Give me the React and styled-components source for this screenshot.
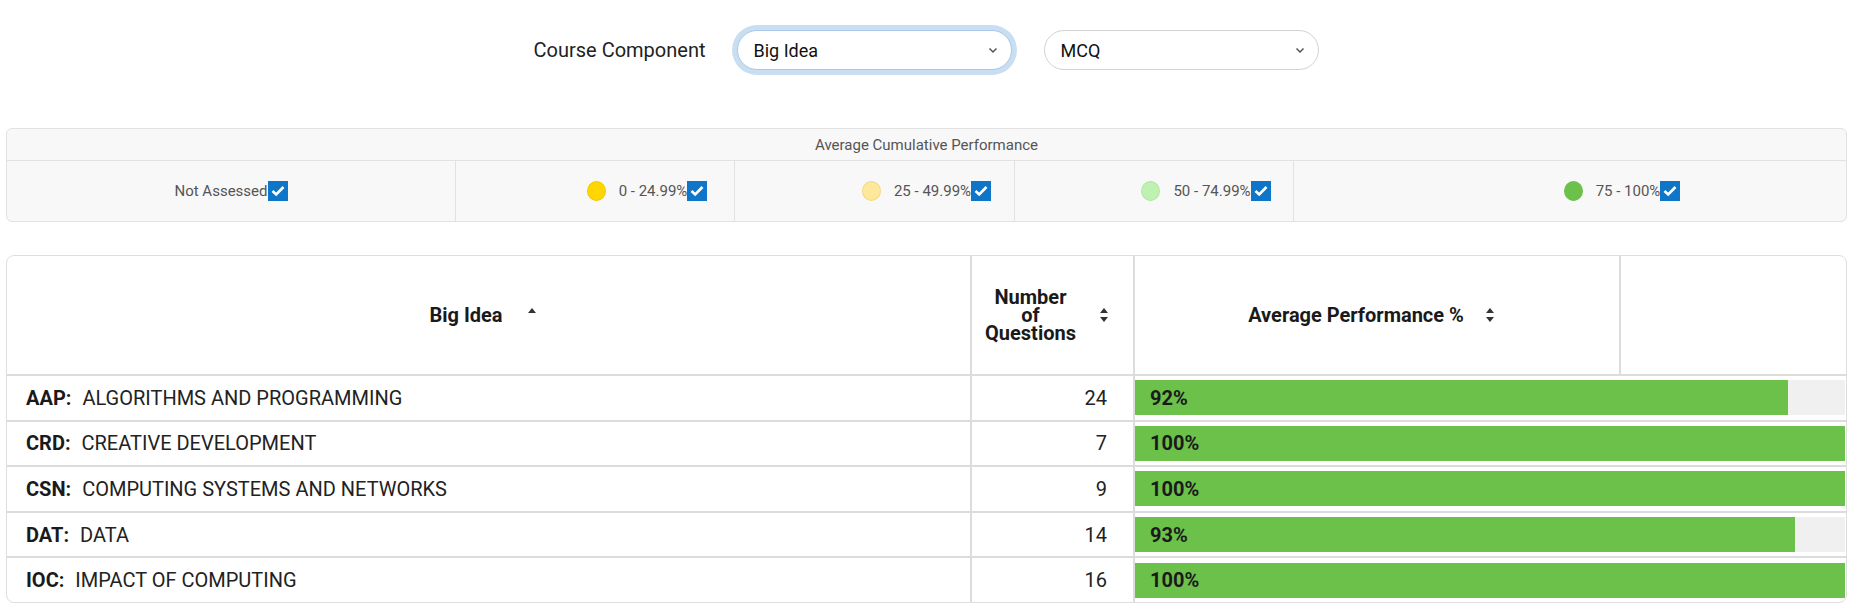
import React from "react";
import styled, { createGlobalStyle } from "styled-components";

const GlobalStyle = createGlobalStyle`
  body {
    margin: 0;
    background: #fff;
    font-family: Roboto, "Liberation Sans", sans-serif;
    color: #212121;
  }
`;

const Page = styled.div`
  padding: 30px 13px 0 6px;
`;

const Controls = styled.div`
  display: flex;
  justify-content: center;
  align-items: center;
  gap: 32px;
  height: 40px;
`;

const ControlLabel = styled.span`
  font-size: 20px;
  color: #222;
`;

const Select = styled.div`
  box-sizing: border-box;
  width: 275px;
  height: 40px;
  display: flex;
  align-items: center;
  justify-content: space-between;
  padding: 0 13px 0 15px;
  border: 1px solid ${(p) => (p.$focused ? "#a9c8ea" : "#d2d2d2")};
  border-radius: 20px;
  box-shadow: ${(p) => (p.$focused ? "0 0 0 5px #cadef2" : "none")};
  font-size: 18px;
  color: #111;
  background: #fff;
`;

const Legend = styled.div`
  margin-top: 58px;
  border: 1px solid #e2e2e2;
  border-radius: 6px;
  background: #f8f8f8;
`;

const LegendTitle = styled.div`
  height: 31px;
  display: flex;
  align-items: center;
  justify-content: center;
  font-size: 15px;
  color: #555;
  border-bottom: 1px solid #e2e2e2;
`;

const LegendRow = styled.div`
  display: grid;
  grid-template-columns: 448px 279px 280px 279px 1fr;
  height: 60px;
`;

const LegendCell = styled.div`
  display: flex;
  align-items: center;
  justify-content: center;
  padding-left: ${(p) => p.$indent || 0}px;
  font-size: 15px;
  color: #555;
  & + & {
    border-left: 1px solid #e2e2e2;
  }
`;

const Swatch = styled.span`
  box-sizing: border-box;
  width: 19px;
  height: 20px;
  border-radius: 50%;
  margin-right: 13px;
  background: ${(p) => p.$color};
  border: 1px solid ${(p) => p.$edge || p.$color};
`;

const Check = styled.span`
  width: 20px;
  height: 20px;
  background: #0f75c8;
  display: inline-flex;
  align-items: center;
  justify-content: center;
`;

const Table = styled.div`
  margin-top: 33px;
  border: 1px solid #dedede;
  border-radius: 8px;
  overflow: hidden;
`;

const HeadRow = styled.div`
  display: grid;
  grid-template-columns: 963px 163px 486px 1fr;
  height: 118px;
`;

const HeadCell = styled.div`
  display: flex;
  align-items: center;
  justify-content: center;
  gap: ${(p) => p.$gap}px;
  padding-right: ${(p) => p.$pr}px;
  font-size: 20px;
  font-weight: 700;
  color: #1a1a1a;
  & + & {
    border-left: 2px solid #dcdcdc;
  }
`;

const HeadText = styled.span`
  text-align: center;
  line-height: 18px;
`;

const Row = styled.div`
  display: grid;
  grid-template-columns: 963px 163px 1fr;
  height: 45.6px;
  box-sizing: border-box;
  border-top: 2px solid #dcdcdc;
`;

const NameCell = styled.div`
  display: flex;
  align-items: center;
  padding-left: 19px;
  font-size: 20px;
  color: #222;
`;

const Code = styled.b`
  margin-right: 11px;
  color: #1a1a1a;
`;

const CountCell = styled.div`
  display: flex;
  align-items: center;
  justify-content: flex-end;
  padding-right: 26px;
  border-left: 2px solid #dcdcdc;
  font-size: 20px;
  color: #222;
`;

const BarCell = styled.div`
  display: flex;
  align-items: center;
  border-left: 2px solid #dcdcdc;
  padding-right: 1px;
`;

const Track = styled.div`
  flex: 1;
  height: 35px;
  background: #f0f0f0;
  display: flex;
`;

const Fill = styled.div`
  background: #6cc14b;
  display: flex;
  align-items: center;
  padding-left: 15px;
  box-sizing: border-box;
  font-size: 20px;
  font-weight: 700;
  color: #1a1a1a;
`;

const Chevron = () => (
  <svg width="10" height="7" viewBox="0 0 10 7">
    <polyline points="1.5,1.5 5,5 8.5,1.5" fill="none" stroke="#555" strokeWidth="1.5" />
  </svg>
);

const CheckMark = () => (
  <Check>
    <svg width="14" height="12" viewBox="0 0 14 12">
      <polyline points="1.5,6 5.2,9.5 12.5,2" fill="none" stroke="#fff" strokeWidth="2.6" />
    </svg>
  </Check>
);

const SortBoth = () => (
  <svg width="8" height="14" viewBox="0 0 8 14">
    <polygon points="4,0 8,5 0,5" fill="#333" />
    <polygon points="0,9 8,9 4,14" fill="#333" />
  </svg>
);

const SortUp = () => (
  <svg width="8" height="14" viewBox="0 0 8 14">
    <polygon points="4,0 8,5 0,5" fill="#333" />
  </svg>
);

const bands = [
  { label: "0 - 24.99%", color: "#ffd600", edge: "#f2c900" },
  { label: "25 - 49.99%", color: "#fde89c", edge: "#f3d980" },
  { label: "50 - 74.99%", color: "#bff2b1", edge: "#b2e6a3" },
  { label: "75 - 100%", color: "#6cc14b" },
];

const rows = [
  { code: "AAP:", name: "ALGORITHMS AND PROGRAMMING", count: 24, pct: 92 },
  { code: "CRD:", name: "CREATIVE DEVELOPMENT", count: 7, pct: 100 },
  { code: "CSN:", name: "COMPUTING SYSTEMS AND NETWORKS", count: 9, pct: 100 },
  { code: "DAT:", name: "DATA", count: 14, pct: 93 },
  { code: "IOC:", name: "IMPACT OF COMPUTING", count: 16, pct: 100 },
];

const App = () => {
  return (
    <>
      <GlobalStyle />
      <Page>
        <Controls>
          <ControlLabel>Course Component</ControlLabel>
          <Select $focused>
            <span>Big Idea</span>
            <Chevron />
          </Select>
          <Select>
            <span>MCQ</span>
            <Chevron />
          </Select>
        </Controls>

        <Legend>
          <LegendTitle>Average Cumulative Performance</LegendTitle>
          <LegendRow>
            <LegendCell>
              Not Assessed
              <CheckMark />
            </LegendCell>
            {bands.map((b) => (
              <LegendCell key={b.label} $indent={104}>
                <Swatch $color={b.color} $edge={b.edge} />
                {b.label}
                <CheckMark />
              </LegendCell>
            ))}
          </LegendRow>
        </Legend>

        <Table>
          <HeadRow>
            <HeadCell $gap={25} $pr={12}>
              <HeadText>Big Idea</HeadText>
              <SortUp />
            </HeadCell>
            <HeadCell $gap={24} $pr={12}>
              <HeadText>
                Number
                <br />
                of
                <br />
                Questions
              </HeadText>
              <SortBoth />
            </HeadCell>
            <HeadCell $gap={22} $pr={12}>
              <HeadText>Average Performance %</HeadText>
              <SortBoth />
            </HeadCell>
            <HeadCell />
          </HeadRow>
          {rows.map((r) => (
            <Row key={r.code}>
              <NameCell>
                <Code>{r.code}</Code>
                {r.name}
              </NameCell>
              <CountCell>{r.count}</CountCell>
              <BarCell>
                <Track>
                  <Fill style={{ width: `${r.pct}%` }}>{r.pct}%</Fill>
                </Track>
              </BarCell>
            </Row>
          ))}
        </Table>
      </Page>
    </>
  );
};

export default App;
